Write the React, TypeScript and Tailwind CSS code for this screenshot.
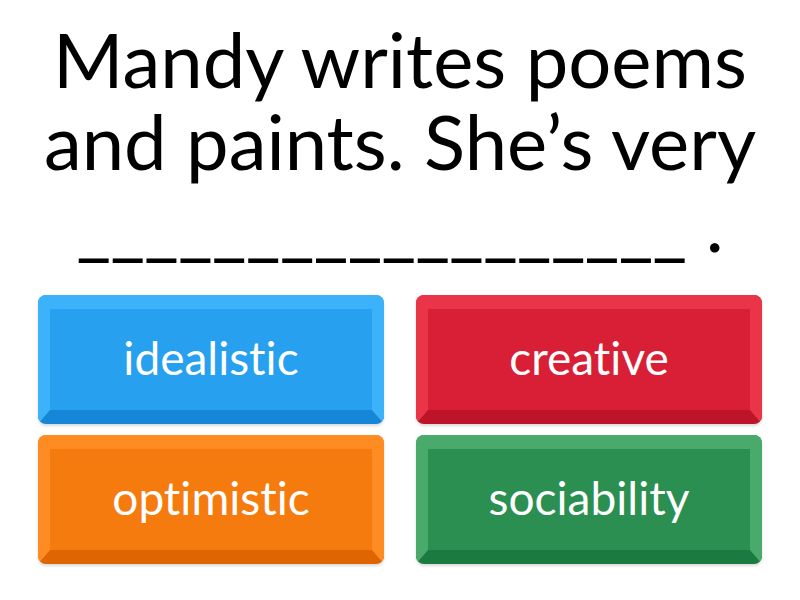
import React from "react";

type Choice = {
  label: string;
  edge: string;
  face: string;
  bottom: string;
};

const choices: Choice[] = [
  { label: "idealistic", edge: "border-[#3cb2fa]", face: "bg-[#26a0ef]", bottom: "border-b-[#1686d8]" },
  { label: "creative", edge: "border-[#ea3448]", face: "bg-[#d91f35]", bottom: "border-b-[#bd1429]" },
  { label: "optimistic", edge: "border-[#ff8c22]", face: "bg-[#f67b0f]", bottom: "border-b-[#de6502]" },
  { label: "sociability", edge: "border-[#4aaa6c]", face: "bg-[#2a8f51]", bottom: "border-b-[#1b7a40]" },
];

const ChoiceButton: React.FC<{ choice: Choice }> = ({ choice }) => (
  <button
    className={`h-[129px] w-full rounded-lg border-t-[14px] border-x-[12px] border-b-[14px] ${choice.edge} ${choice.bottom} ${choice.face} flex items-center justify-center shadow-[0_2px_3px_rgba(0,0,0,0.15)]`}
  >
    <span className="text-white text-[46px] leading-none pb-[4px]">{choice.label}</span>
  </button>
);

export default function App() {
  return (
    <div
      className="w-[800px] h-[600px] bg-white overflow-hidden flex flex-col [font-variant-ligatures:none]"
      style={{ fontFamily: "Lato, 'Open Sans', sans-serif" }}
    >
      <div className="h-[295px] flex flex-col items-center pt-[18px] text-black text-[76px] leading-[82px] text-center">
        <p>Mandy writes poems</p>
        <p>and paints. She’s very</p>
        <p>
          <span className="tracking-[-1px]">__________________</span> .
        </p>
      </div>
      <div className="grid grid-cols-2 gap-x-[32px] gap-y-[11px] px-[38px]">
        {choices.map((c) => (
          <ChoiceButton key={c.label} choice={c} />
        ))}
      </div>
    </div>
  );
}
